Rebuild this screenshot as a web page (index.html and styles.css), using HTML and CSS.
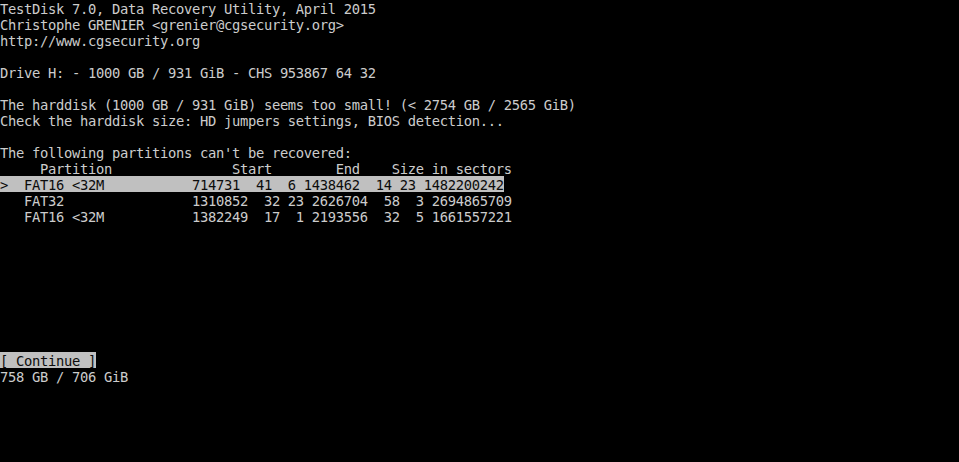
FILE: index.html
```html
<!DOCTYPE html>
<html>
<head>
<meta charset="utf-8">
<link rel="stylesheet" href="styles.css">
</head>
<body>
<div class="term">
<div class="line">TestDisk 7.0, Data Recovery Utility, April 2015</div>
<div class="line">Christophe GRENIER &lt;grenier@cgsecurity.org&gt;</div>
<div class="line">http://www.cgsecurity.org</div>
<div class="line"></div>
<div class="line">Drive H: - 1000 GB / 931 GiB - CHS 953867 64 32</div>
<div class="line"></div>
<div class="line">The harddisk (1000 GB / 931 GiB) seems too small! (&lt; 2754 GB / 2565 GiB)</div>
<div class="line">Check the harddisk size: HD jumpers settings, BIOS detection...</div>
<div class="line"></div>
<div class="line">The following partitions can't be recovered:</div>
<div class="line">     Partition               Start        End    Size in sectors</div>
<div class="line"><span class="sel">&gt;  FAT16 &lt;32M           714731  41  6 1438462  14 23 1482200242</span></div>
<div class="line">   FAT32                1310852  32 23 2626704  58  3 2694865709</div>
<div class="line">   FAT16 &lt;32M           1382249  17  1 2193556  32  5 1661557221</div>
<div class="line"></div>
<div class="line"></div>
<div class="line"></div>
<div class="line"></div>
<div class="line"></div>
<div class="line"></div>
<div class="line"></div>
<div class="line"></div>
<div class="line"><span class="sel">[ Continue ]</span></div>
<div class="line">758 GB / 706 GiB</div>
</div>
</body>
</html>
```
FILE: styles.css
```css
html, body {
  margin: 0;
  padding: 0;
  background: #000000;
  height: 100%;
}
.term {
  font-family: "DejaVu Sans Mono", "Liberation Mono", monospace;
  font-size: 13.8px;
  letter-spacing: -0.31px;
  line-height: 19px;
  color: #cccccc;
}
.line {
  height: 16px;
  white-space: pre;
}
.sel {
  display: inline-block;
  height: 16px;
  overflow: hidden;
  vertical-align: top;
  background: #c0c0c0;
  color: #0c0c0c;
}
```
